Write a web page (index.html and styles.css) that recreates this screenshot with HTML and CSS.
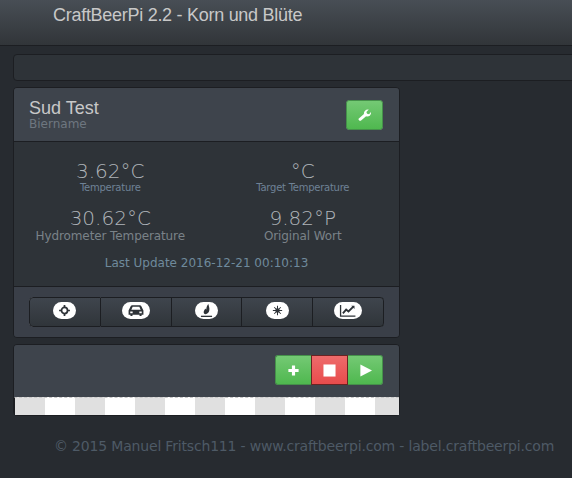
FILE: index.html
```html
<!DOCTYPE html>
<html lang="en">
<head>
    <meta charset="UTF-8">
    <meta name="viewport" content="width=device-width, initial-scale=1.0">
    <title>CraftBeerPi</title>
    <link rel="stylesheet" href="styles.css">
</head>
<body>
    <nav class="navbar"><span class="brand">CraftBeerPi 2.2 - Korn und Blüte</span></nav>
    <div class="content">
        <div class="alert-bar"></div>
        <div class="panel">
            <div class="panel-heading">
                <div>
                    <div class="panel-title">Sud Test</div>
                    <div class="panel-sub">Biername</div>
                </div>
                <button class="btn btn-green btn-single">
                    <svg class="icon" viewBox="0 0 14 14"><path d="M.6 11.700 6.400 6.500C6 3.600 8.600 1 11.600 1.700L9 4.200 9.800 6.200 11.900 6.600 14 4.300C14.400 7.500 11.700 9.800 8.700 8.900L3 13.600C1.800 14.200 .2 12.900 .6 11.700Z" fill="#fff"/></svg>
                </button>
            </div>
            <div class="panel-body">
                <div class="stats">
                    <div class="stat"><div class="stat-value">3.62°C</div><div class="stat-label small">Temperature</div></div>
                    <div class="stat"><div class="stat-value">°C</div><div class="stat-label small">Target Temperature</div></div>
                    <div class="stat"><div class="stat-value">30.62°C</div><div class="stat-label">Hydrometer Temperature</div></div>
                    <div class="stat"><div class="stat-value">9.82°P</div><div class="stat-label">Original Wort</div></div>
                </div>
                <div class="last-update">Last Update 2016-12-21 00:10:13</div>
            </div>
            <div class="panel-footer">
                <div class="btn-group">
                    <button class="tool"><span class="badge">
                        <svg class="icon" viewBox="-2 -2 18 18"><circle cx="7" cy="7" r="4.200" fill="none" stroke="#2e3338" stroke-width="2.400"/><path d="M5.800 -.5H8.200V3H5.800ZM5.800 11H8.200V14.500H5.800ZM-.5 5.800H3V8.200H-.5ZM11 5.800H14.500V8.200H11Z" fill="#2e3338"/></svg>
                    </span></button>
                    <button class="tool"><span class="badge">
                        <svg class="icon wide" viewBox="0 0 18 14"><path d="M1 7 3.400 2.200C3.700 1.600 4.200 1.300 4.800 1.300H13.200C13.800 1.300 14.300 1.600 14.600 2.200L17 7V11.600H15V13H12.800V11.600H5.200V13H3V11.600H1ZM4 6.200H14L12.600 3H5.400ZM2.800 8V10H5.400V8ZM12.600 8V10H15.200V8Z" fill="#2e3338" fill-rule="evenodd"/></svg>
                    </span></button>
                    <button class="tool"><span class="badge">
                        <svg class="icon" viewBox="0 0 14 14"><path d="M9 0C9.400 2.400 10.600 4.400 10 7 9.500 9.400 8 10.800 6 11 4.600 11 3.800 9.800 4 8.400 4.200 7 5.200 6 5.800 4.800 6.200 5.400 6.400 5.800 6.800 6 6.800 3.800 7.400 1.800 9 0Z" fill="#2e3338"/><path d="M1 12.600H13V14H1Z" fill="#2e3338"/></svg>
                    </span></button>
                    <button class="tool"><span class="badge">
                        <svg class="icon" viewBox="0 0 14 14"><path d="M7 2V12M2 7H12M3.500 3.500 10.500 10.500M10.500 3.500 3.500 10.500" stroke="#2e3338" stroke-width="1.100"/><circle cx="7" cy="7" r="2.400" fill="#2e3338"/></svg>
                    </span></button>
                    <button class="tool"><span class="badge">
                        <svg class="icon wide" viewBox="0 0 18 14"><path d="M1 1V13H17" fill="none" stroke="#2e3338" stroke-width="1.400"/><path d="M3.500 10 7 6 9.500 8 14.500 3" fill="none" stroke="#2e3338" stroke-width="2"/><path d="M12.500 1.800H16V5.300Z" fill="#2e3338"/></svg>
                    </span></button>
                </div>
            </div>
        </div>
        <div class="panel panel-last">
            <div class="panel-heading heading-actions">
                <div class="btn-row">
                    <button class="btn btn-green btn-left">
                        <svg class="icon" viewBox="0 0 14 14"><path d="M5.300 1.500H8.700V5.300H12.500V8.700H8.700V12.500H5.300V8.700H1.500V5.300H5.300Z" fill="#fff"/></svg>
                    </button>
                    <button class="btn btn-red">
                        <svg class="icon" viewBox="0 0 14 14"><path d="M.5 .5H13.500V13.500H.5Z" fill="#fff"/></svg>
                    </button>
                    <button class="btn btn-green btn-right">
                        <svg class="icon" viewBox="0 0 14 14"><path d="M1.500 .5 14 7 1.500 13.500Z" fill="#fff"/></svg>
                    </button>
                </div>
            </div>
            <div class="chart-strip"></div>
        </div>
        <footer class="footer">© 2015 Manuel Fritsch111 - www.craftbeerpi.com - label.craftbeerpi.com</footer>
    </div>
</body>
</html>
```

FILE: styles.css
```css
html, body {
    overflow: hidden;
}
body {
    margin: 0;
    background-color: #272b30;
    font-family: "DejaVu Sans", sans-serif;
    color: #c8c8c8;
}
.navbar {
    height: 45px;
    border-bottom: 1px solid #1c1e22;
    background-image: linear-gradient(#484e55, #3a3f44 60%, #313539);
}
.brand {
    display: block;
    padding: 4px 0 0 53px;
    font-family: "Liberation Sans", Arial, sans-serif;
    font-size: 18px;
    line-height: 22px;
    letter-spacing: -0.28px;
    color: #c8c8c8;
}
.content {
    padding: 8px 0 0 13px;
}
.alert-bar {
    height: 25px;
    margin-right: -10px;
    margin-bottom: 6px;
    background-color: #2e3338;
    border: 1px solid #1c1e22;
    border-radius: 4px;
}
.panel {
    width: 385px;
    background-color: #2e3338;
    border: 1px solid #1c1e22;
    border-radius: 4px;
    margin-bottom: 6px;
}
.panel-heading {
    display: flex;
    justify-content: space-between;
    align-items: center;
    height: 54px;
    padding: 0 16px 0 15px;
    background-color: #3e444c;
    border-bottom: 1px solid #1c1e22;
    border-radius: 3px 3px 0 0;
    box-sizing: border-box;
}
.panel-title {
    font-family: "Liberation Sans", Arial, sans-serif;
    font-size: 18px;
    line-height: 20px;
    color: #c8c8c8;
}
.panel-sub {
    font-size: 12px;
    line-height: 13px;
    color: #6e7780;
}
.panel-body {
    height: 144px;
    box-sizing: border-box;
    padding-top: 18px;
}
.stats {
    display: grid;
    grid-template-columns: 1fr 1fr;
    row-gap: 13px;
}
.stat {
    text-align: center;
}
.stat-value {
    font-weight: 200;
    font-size: 20px;
    line-height: 22px;
    color: #b0b5ba;
}
.stat-label {
    font-size: 12px;
    line-height: 15px;
    letter-spacing: -0.1px;
    color: #7a8288;
}
.stat-label.small {
    font-size: 10px;
    line-height: 12px;
    letter-spacing: -0.25px;
    color: #6f8296;
}
.last-update {
    margin-top: 12px;
    text-align: center;
    font-size: 12px;
    line-height: 15px;
    color: #6f8a9c;
}
.panel-footer {
    height: 51px;
    padding: 10px 15px 0;
    box-sizing: border-box;
    background-color: #3a3f48;
    border-top: 1px solid #1c1e22;
    border-radius: 0 0 3px 3px;
}
.btn-group {
    display: flex;
}
.tool {
    flex: 1;
    display: flex;
    justify-content: center;
    align-items: center;
    height: 30px;
    padding: 0 0 3px;
    background-image: linear-gradient(#3f454d, #30353a);
    border: 1px solid #1c1e22;
    border-left-width: 0;
}
.tool:first-child {
    border-left-width: 1px;
    border-radius: 4px 0 0 4px;
}
.tool:last-child {
    border-radius: 0 4px 4px 0;
}
.badge {
    display: flex;
    align-items: center;
    height: 17px;
    padding: 0 5px;
    background-color: #fff;
    border-radius: 9px;
}
.icon {
    display: block;
    width: 13px;
    height: 13px;
}
.icon.wide {
    width: 18px;
}
.btn {
    display: flex;
    justify-content: center;
    align-items: center;
    height: 30px;
    padding: 0;
}
.btn-green {
    background-image: linear-gradient(#74c974, #4fb84f);
    border: 1px solid #45914a;
}
.btn-red {
    width: 37px;
    background-image: linear-gradient(#ee6b6b, #e84c4c);
    border: 1px solid #6b2323;
}
.btn-single {
    width: 37px;
    border-radius: 3px;
}
.heading-actions {
    justify-content: flex-end;
    height: 52px;
    padding-bottom: 2px;
    border-bottom: 0;
}
.btn-row {
    display: flex;
}
.btn-left {
    width: 36px;
    border-radius: 3px 0 0 3px;
    border-right: 0;
}
.btn-right {
    width: 35px;
    border-radius: 0 3px 3px 0;
    border-left: 0;
}
.panel-last {
    margin-bottom: 0;
}
.chart-strip {
    height: 17px;
    border-top: 1px dashed #c8c8c8;
    border-left: 1px solid #1c1e22;
    background-image: repeating-linear-gradient(90deg, #e0e0e0 0 30px, #fff 30px 60px);
}
.footer {
    margin-top: 22px;
    padding-left: 41px;
    font-size: 14px;
    line-height: 17px;
    letter-spacing: -0.18px;
    white-space: nowrap;
    color: #4e5a66;
}
```
